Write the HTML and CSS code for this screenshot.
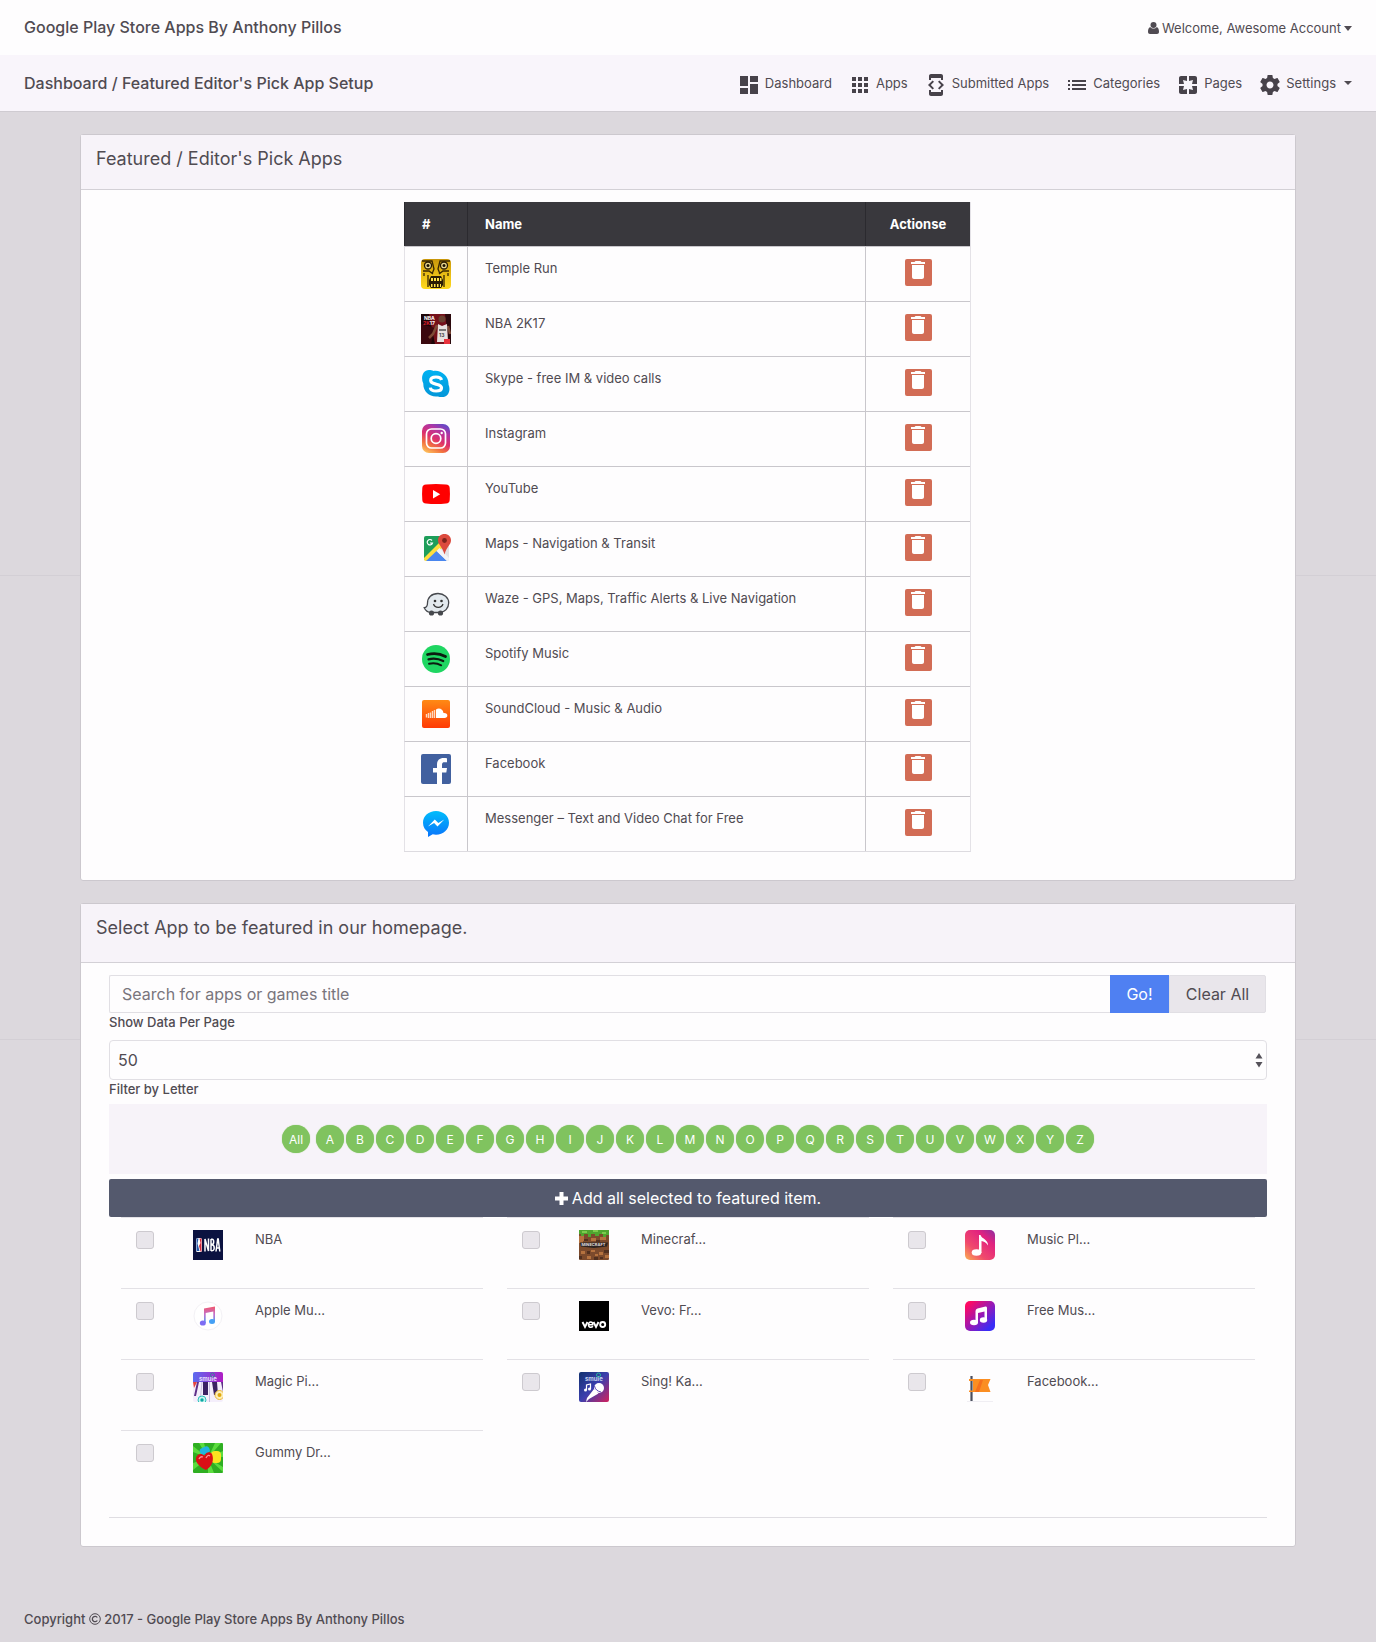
FILE: index.html
```html
<!DOCTYPE html>
<html lang="en">
<head>
<meta charset="utf-8">
<title>Google Play Store Apps By Anthony Pillos</title>
<link rel="stylesheet" href="styles.css">
</head>
<body>
<header class="topbar">
  <a class="brand" href="#">Google Play Store Apps By Anthony Pillos</a>
  <a class="account" href="#">
    <svg width="11" height="12" viewBox="0 0 11 12" fill="currentColor"><circle cx="5.500" cy="3" r="3"/><path d="M2.200 5C.6 5.500 0 7.500 0 9.800 0 11.200.8 12 2 12h7c1.200 0 2-.8 2-2.200C11 7.500 10.400 5.500 8.800 5 7 7 4 7 2.200 5z"/></svg>
    <span>Welcome, Awesome Account</span>
    <span class="caret"></span>
  </a>
</header>
<nav class="subnav">
  <h1 class="crumb">Dashboard / Featured Editor's Pick App Setup</h1>
  <ul class="menu">
    <li><a href="#"><svg class="mi" viewBox="0 0 24 24"><path d="M3 13h8V3H3v10zm0 8h8v-6H3v6zm10 0h8V11h-8v10zm0-18v6h8V3h-8z"/></svg>Dashboard</a></li>
    <li><a href="#"><svg class="mi" viewBox="0 0 24 24"><path d="M4 8h4V4H4v4zm6 12h4v-4h-4v4zm-6 0h4v-4H4v4zm0-6h4v-4H4v4zm6 0h4v-4h-4v4zm6-10v4h4V4h-4zm-6 4h4V4h-4v4zm6 6h4v-4h-4v4zm0 6h4v-4h-4v4z"/></svg>Apps</a></li>
    <li><a href="#"><svg class="mi" viewBox="0 0 24 24"><path d="M7 5h10v2h2V3c0-1.100-.9-1.990-2-1.990L7 1c-1.100 0-2 .9-2 2v4h2V5zm8.410 11.590L20 12l-4.590-4.590L14 8.830 17.170 12 14 15.170l1.410 1.420zM10 15.170L6.830 12 10 8.830 8.590 7.410 4 12l4.590 4.590L10 15.170zM17 19H7v-2H5v4c0 1.100.9 2 2 2h10c1.100 0 2-.9 2-2v-4h-2v2z"/></svg>Submitted Apps</a></li>
    <li><a href="#"><svg class="mi" viewBox="0 0 24 24"><path d="M3 13h2v-2H3v2zm0 4h2v-2H3v2zm0-8h2V7H3v2zm4 4h14v-2H7v2zm0 4h14v-2H7v2zM7 7v2h14V7H7z"/></svg>Categories</a></li>
    <li><a href="#"><svg class="mi" viewBox="0 0 24 24"><path d="M3 5v6h5L7 7l4 1V3H5c-1.100 0-2 .9-2 2zm5 8H3v6c0 1.100.9 2 2 2h6v-5l-4 1 1-4zm9 4l-4-1v5h6c1.100 0 2-.9 2-2v-6h-5l1 4zm2-14h-6v5l4-1-1 4h5V5c0-1.100-.9-2-2-2z"/></svg>Pages</a></li>
    <li><a href="#"><svg class="mi" viewBox="0 0 24 24"><path d="M19.430 12.980c.04-.32.07-.64.07-.98s-.03-.66-.07-.98l2.110-1.650c.19-.15.24-.42.12-.64l-2-3.460c-.12-.22-.39-.3-.61-.22l-2.490 1c-.52-.4-1.080-.73-1.690-.98l-.38-2.650C14.460 2.180 14.250 2 14 2h-4c-.25 0-.46.18-.49.42l-.38 2.650c-.61.25-1.170.59-1.690.98l-2.490-1c-.23-.09-.49 0-.61.22l-2 3.460c-.13.22-.07.49.12.64l2.110 1.650c-.04.32-.07.65-.07.98s.03.66.07.98l-2.110 1.650c-.19.15-.24.42-.12.64l2 3.460c.12.22.39.3.61.22l2.490-1c.52.4 1.080.73 1.690.98l.38 2.650c.03.24.24.42.49.42h4c.25 0 .46-.18.49-.42l.38-2.650c.61-.25 1.170-.59 1.690-.98l2.490 1c.23.09.49 0 .61-.22l2-3.460c.12-.22.07-.49-.12-.64l-2.110-1.650zM12 15.500c-1.930 0-3.500-1.570-3.500-3.500s1.570-3.500 3.500-3.500 3.500 1.570 3.500 3.500-1.570 3.500-3.500 3.500z"/></svg>Settings<span class="caret caret-gap"></span></a></li>
  </ul>
</nav>

<main class="page">
  <section class="card">
    <h2 class="card-title">Featured / Editor's Pick Apps</h2>
    <div class="card-table">
      <table class="picks">
        <thead><tr><th class="c-icon">#</th><th>Name</th><th class="c-act">Actionse</th></tr></thead>
        <tbody>
          <tr><td><svg class="app" viewBox="0 0 30 30"><defs><linearGradient id="tr" x1="0" y1="0" x2="0" y2="1"><stop offset="0" stop-color="#c8960a"/><stop offset=".6" stop-color="#eec318"/><stop offset="1" stop-color="#ffd91c"/></linearGradient></defs><rect width="30" height="30" rx="4" fill="url(#tr)"/><path d="M1 2h10l2 8-2 5M29 2H19l-2 8 2 5M2 12h6l4 3M28 12h-6l-4 3M7 16v12M23 16v12M3 14v3M27 14v3" fill="none" stroke="#3a2703" stroke-width="1.300"/><circle cx="7" cy="6.500" r="3.500" fill="#e9d890" stroke="#2a1b02" stroke-width="1.300"/><circle cx="23" cy="6.500" r="3.500" fill="#e9d890" stroke="#2a1b02" stroke-width="1.300"/><circle cx="7" cy="6.500" r="1.500" fill="#1d1200"/><circle cx="23" cy="6.500" r="1.500" fill="#1d1200"/><path d="M10 17h10l2 4v5l-2 3H10l-2-3v-5z" fill="#2a1b02"/><path d="M10 19h2v3h-2zM13 19h2v3h-2zM16 19h2v3h-2zM19 19h1.500v3H19zM10 25h1.500v3H10zM13 25h1.500v3H13zM16 25h1.500v3H16zM19 25h1v3h-1z" fill="#ffe14a"/></svg></td><td>Temple Run</td><td class="c-act"><button class="trash" aria-label="Remove Temple Run"><svg viewBox="0 0 24 24"><path d="M6 19c0 1.100.9 2 2 2h8c1.100 0 2-.9 2-2V7H6v12zM19 4h-3.500l-1-1h-5l-1 1H5v2h14V4z"/></svg></button></td></tr>
          <tr><td><svg class="app" viewBox="0 0 30 30"><rect width="30" height="30" fill="#1c0508"/><path d="M8 0h22v30H14z" fill="#74101a"/><path d="M0 10l14 4-4 16H0z" fill="#3b080e"/><path d="M24 0h6v30h-2z" fill="#2b080c"/><text x="3" y="6" font-size="5" font-weight="700" fill="#fff">NBA</text><text x="2" y="11" font-size="5" font-weight="700" fill="#e3222e">2K<tspan fill="#fff">17</tspan></text><circle cx="21" cy="5" r="3.500" fill="#6b4030"/><path d="M16 11l-4 9-4 4M27 12l2 8" stroke="#7e4a36" stroke-width="2.500" fill="none"/><path d="M17 10l4 2 5-2 1 18H16z" fill="#e8e2df"/><path d="M18 16h7" stroke="#555" stroke-width="1.500"/><text x="18" y="23" font-size="5" font-weight="700" fill="#444">13</text><rect x="23" y="25" width="6" height="5" fill="#e8313c"/></svg></td><td>NBA 2K17</td><td class="c-act"><button class="trash" aria-label="Remove NBA 2K17"><svg viewBox="0 0 24 24"><path d="M6 19c0 1.100.9 2 2 2h8c1.100 0 2-.9 2-2V7H6v12zM19 4h-3.500l-1-1h-5l-1 1H5v2h14V4z"/></svg></button></td></tr>
          <tr><td><svg class="app" viewBox="0 0 30 30"><defs><linearGradient id="sk" x1="0" y1="0" x2="0" y2="1"><stop offset="0" stop-color="#00b2f2"/><stop offset="1" stop-color="#0496d8"/></linearGradient></defs><path d="M8 1c2 0 3 .4 4.500 1C20 .8 28 7 27.500 15.500 30 21 27.500 28 21 28c-2 0-3 0-4-.6C9 28.500 2 23 2.300 14.500-.5 9 1.500 1 8 1z" fill="url(#sk)"/><path d="M20.500 11c-.5-2-2.500-3-5.500-3-3.200 0-5.300 1.300-5.300 3.500 0 2.500 2.500 3 5.500 3.700 3 .7 5.300 1.200 5.300 3.500 0 2-2 3.300-5.300 3.300S9.600 20.800 9.300 18.600" fill="none" stroke="#fff" stroke-width="3.200"/></svg></td><td>Skype - free IM &amp; video calls</td><td class="c-act"><button class="trash" aria-label="Remove Skype"><svg viewBox="0 0 24 24"><path d="M6 19c0 1.100.9 2 2 2h8c1.100 0 2-.9 2-2V7H6v12zM19 4h-3.500l-1-1h-5l-1 1H5v2h14V4z"/></svg></button></td></tr>
          <tr><td><svg class="app" viewBox="0 0 30 30"><defs><linearGradient id="ig" x1=".2" y1="1" x2=".7" y2="0"><stop offset="0" stop-color="#fdbf5c"/><stop offset=".25" stop-color="#f2703f"/><stop offset=".5" stop-color="#dd2f6c"/><stop offset=".8" stop-color="#b135a4"/><stop offset="1" stop-color="#6a48c4"/></linearGradient></defs><rect x="1" y="0" width="28" height="29" rx="7" fill="url(#ig)"/><rect x="5.500" y="5" width="19" height="19" rx="5" fill="none" stroke="#fff" stroke-width="1.700"/><circle cx="15" cy="14.500" r="4.800" fill="none" stroke="#fff" stroke-width="1.700"/><circle cx="20.700" cy="9" r="1.200" fill="#fff"/></svg></td><td>Instagram</td><td class="c-act"><button class="trash" aria-label="Remove Instagram"><svg viewBox="0 0 24 24"><path d="M6 19c0 1.100.9 2 2 2h8c1.100 0 2-.9 2-2V7H6v12zM19 4h-3.500l-1-1h-5l-1 1H5v2h14V4z"/></svg></button></td></tr>
          <tr><td><svg class="app" viewBox="0 0 30 30"><path d="M5 5.500q10-1 20 0 3.500.3 3.700 3.500.5 6 0 12-.2 3.200-3.700 3.500-10 1-20 0-3.500-.3-3.700-3.500-.5-6 0-12Q1.500 5.800 5 5.500z" fill="#f00"/><path d="M12 11v8.500l7.200-4.300z" fill="#fff"/></svg></td><td>YouTube</td><td class="c-act"><button class="trash" aria-label="Remove YouTube"><svg viewBox="0 0 24 24"><path d="M6 19c0 1.100.9 2 2 2h8c1.100 0 2-.9 2-2V7H6v12zM19 4h-3.500l-1-1h-5l-1 1H5v2h14V4z"/></svg></button></td></tr>
          <tr><td><svg class="app" viewBox="0 0 30 30"><rect x="3" y="2" width="25" height="25" rx="2" fill="#e2e2e6"/><path d="M5 2h17v7L3 26V4q0-2 2-2z" fill="#1e9e5a"/><path d="M3 24L20 7l3 5L8 27H5q-2 0-2-2z" fill="#ffdf3d"/><path d="M5 27l10.500-10L26 27z" fill="#4a86ee"/><path d="M15.500 17l3-3L28 24v1q0 2-2 2z" fill="#f3f3f6"/><path d="M23.500 0C19.800 0 17 2.700 17 6.300c0 4.700 4.700 6.700 6.500 14.200C25.300 13 30 11 30 6.300 30 2.700 27.200 0 23.500 0z" fill="#dc4a3e"/><circle cx="23.500" cy="6.500" r="2.400" fill="#7d231c"/><path d="M11 6.500A2.700 2.700 0 1 0 11.500 9H9" fill="none" stroke="#fff" stroke-width="1.200"/></svg></td><td>Maps - Navigation &amp; Transit</td><td class="c-act"><button class="trash" aria-label="Remove Maps"><svg viewBox="0 0 24 24"><path d="M6 19c0 1.100.9 2 2 2h8c1.100 0 2-.9 2-2V7H6v12zM19 4h-3.500l-1-1h-5l-1 1H5v2h14V4z"/></svg></button></td></tr>
          <tr><td><svg class="app" viewBox="0 0 30 30"><path d="M17 4.500c-6.500 0-10.500 4-10.500 9.500 0 3-1 4.500-3.300 4.700C4.500 21.500 7 23.500 10.500 23.500H18c6 0 9.700-4.500 9.700-9.700C27.700 8.500 23 4.500 17 4.500z" fill="#e3e9ee" stroke="#46484d" stroke-width="1.300"/><circle cx="10.500" cy="24" r="2.600" fill="#46484d"/><circle cx="19.500" cy="24" r="2.600" fill="#46484d"/><circle cx="14" cy="12" r="1.300" fill="#333"/><circle cx="20.500" cy="12" r="1.300" fill="#333"/><path d="M12.500 15c1.500 4.500 8 4.500 9.500 0" fill="none" stroke="#333" stroke-width="1.300"/></svg></td><td>Waze - GPS, Maps, Traffic Alerts &amp; Live Navigation</td><td class="c-act"><button class="trash" aria-label="Remove Waze"><svg viewBox="0 0 24 24"><path d="M6 19c0 1.100.9 2 2 2h8c1.100 0 2-.9 2-2V7H6v12zM19 4h-3.500l-1-1h-5l-1 1H5v2h14V4z"/></svg></button></td></tr>
          <tr><td><svg class="app" viewBox="0 0 30 30"><circle cx="15" cy="15" r="14" fill="#1fd662"/><path d="M6.500 10.500c6-1.500 12.500-1 18 2" stroke="#0c1b10" stroke-width="2.800" fill="none" stroke-linecap="round"/><path d="M7.500 15.300c5-1.300 10-.7 14.700 1.700" stroke="#0c1b10" stroke-width="2.300" fill="none" stroke-linecap="round"/><path d="M8 19.800c4.500-1 8.500-.5 12.200 1.500" stroke="#0c1b10" stroke-width="1.900" fill="none" stroke-linecap="round"/></svg></td><td>Spotify Music</td><td class="c-act"><button class="trash" aria-label="Remove Spotify"><svg viewBox="0 0 24 24"><path d="M6 19c0 1.100.9 2 2 2h8c1.100 0 2-.9 2-2V7H6v12zM19 4h-3.500l-1-1h-5l-1 1H5v2h14V4z"/></svg></button></td></tr>
          <tr><td><svg class="app" viewBox="0 0 30 30"><defs><linearGradient id="sc" x1="0" y1="0" x2="0" y2="1"><stop offset="0" stop-color="#ff8a15"/><stop offset="1" stop-color="#ff3a05"/></linearGradient></defs><rect x="1" y="1" width="28" height="28" rx="2" fill="url(#sc)"/><path d="M15 10.500c3-2 7-.5 7.500 3.500 5-.5 5 5 1 5h-8.500z" fill="#fff"/><path d="M5.500 15v3.500M7.500 14v5M9.500 13.500V19M11.500 12v7M13.500 11v8" stroke="#ffd9c0" stroke-width="1.400"/></svg></td><td>SoundCloud - Music &amp; Audio</td><td class="c-act"><button class="trash" aria-label="Remove SoundCloud"><svg viewBox="0 0 24 24"><path d="M6 19c0 1.100.9 2 2 2h8c1.100 0 2-.9 2-2V7H6v12zM19 4h-3.500l-1-1h-5l-1 1H5v2h14V4z"/></svg></button></td></tr>
          <tr><td><svg class="app" viewBox="0 0 30 30"><rect width="30" height="30" rx="2" fill="#41609f"/><path d="M16 30V18.500h-4V14h4v-3.500C16 6.500 18.500 4 22.500 4c1.500 0 3 .2 3.500.3v4h-2.500c-2 0-2.500 1-2.500 2.500V14h5l-.7 4.500H21V30z" fill="#fff"/></svg></td><td>Facebook</td><td class="c-act"><button class="trash" aria-label="Remove Facebook"><svg viewBox="0 0 24 24"><path d="M6 19c0 1.100.9 2 2 2h8c1.100 0 2-.9 2-2V7H6v12zM19 4h-3.500l-1-1h-5l-1 1H5v2h14V4z"/></svg></button></td></tr>
          <tr><td><svg class="app" viewBox="0 0 30 30"><defs><linearGradient id="ms" x1="0" y1="0" x2="0" y2="1"><stop offset="0" stop-color="#00bdfb"/><stop offset="1" stop-color="#0a74fb"/></linearGradient></defs><path d="M15 2C7.800 2 2 7 2 13.700c0 4.300 2 7.300 5 9.300v5l4.700-2.700c1 .2 2.200.4 3.300.4 7.200 0 13-5.300 13-12S22.200 2 15 2z" fill="url(#ms)"/><path d="M7 17.500l6.800-7 3.500 3.500 6-3.500-6.800 7-3.400-3.500z" fill="#fff"/></svg></td><td>Messenger – Text and Video Chat for Free</td><td class="c-act"><button class="trash" aria-label="Remove Messenger"><svg viewBox="0 0 24 24"><path d="M6 19c0 1.100.9 2 2 2h8c1.100 0 2-.9 2-2V7H6v12zM19 4h-3.500l-1-1h-5l-1 1H5v2h14V4z"/></svg></button></td></tr>
        </tbody>
      </table>
    </div>
  </section>

  <section class="card">
    <h2 class="card-title card-title-tall">Select App to be featured in our homepage.</h2>
    <form class="finder">
      <div class="search">
        <input type="text" class="search-box" placeholder="Search for apps or games title" aria-label="Search for apps or games title">
        <button type="button" class="btn-go">Go!</button>
        <button type="button" class="btn-clear">Clear All</button>
      </div>
      <label class="label" for="per-page">Show Data Per Page</label>
      <div class="select-wrap">
        <select id="per-page" class="select"><option>50</option></select>
        <svg class="select-arrows" width="8" height="16" viewBox="0 0 8 16"><path d="M4 1l3.500 5.500h-7zM4 15.500L.5 10h7z" fill="#55525a"/></svg>
      </div>
      <p class="label label-filter">Filter by Letter</p>
      <div class="letters">
        <a class="all" href="#">All</a><a href="#">A</a><a href="#">B</a><a href="#">C</a><a href="#">D</a><a href="#">E</a><a href="#">F</a><a href="#">G</a><a href="#">H</a><a href="#">I</a><a href="#">J</a><a href="#">K</a><a href="#">L</a><a href="#">M</a><a href="#">N</a><a href="#">O</a><a href="#">P</a><a href="#">Q</a><a href="#">R</a><a href="#">S</a><a href="#">T</a><a href="#">U</a><a href="#">V</a><a href="#">W</a><a href="#">X</a><a href="#">Y</a><a href="#">Z</a>
      </div>
      <button type="button" class="btn-add"><svg width="13" height="13" viewBox="0 0 13 13"><path d="M4.500 0h4v4.500H13v4H8.500V13h-4V8.500H0v-4h4.500z" fill="#fff"/></svg>Add all selected to featured item.</button>
      <div class="apps">
        <label class="pick"><input type="checkbox"><svg class="app" viewBox="0 0 30 30"><rect width="30" height="30" fill="#0b1240"/><rect x="3" y="8" width="6" height="14" rx="1.500" fill="#fff"/><path d="M3.500 8.500h2l-1 5 2 7.500h-3z" fill="#2358a8"/><path d="M6.500 8.500h2v13h-1L6 16l1.500-3z" fill="#d3283c"/><path d="M12 21.500V9l3.500 12V8.500M18 9v12M18 9.200h1.200q1.500 0 1.500 2.800t-2.700 2.800M18 15h1.200q2 0 2 3t-3.200 2.800M23 21.500l1.700-12.500h.5l1.600 12.500M23.500 18h3" fill="none" stroke="#fff" stroke-width="1.500"/></svg><span>NBA</span></label>
        <label class="pick"><input type="checkbox"><svg class="app" viewBox="0 0 30 30"><rect width="30" height="30" rx="1" fill="#7c4a2c"/><path d="M0 6h5v3h4v2H4v2H0zM12 8h5v3h-5zM21 7h6v3h-6zM2 21h4v3H2zM12 20h4v2h-4zM20 22h4v3h-4zM8 26h4v3H8zM26 25h4v3h-4zM16 24h3v2h-3z" fill="#b5723f"/><path d="M5 9h4v2H5zM17 10h4v2h-4zM8 21h3v3H8zM25 20h5v3h-5zM15 27h4v3h-4zM0 26h3v3H0zM21 27h3v2h-3z" fill="#51301f"/><path d="M0 0h30v5h-3v2h-3V4h-4v2h-4V4h-4v3H9V4H5v2H2V4H0z" fill="#4fa62f"/><path d="M3 1h5v2H3zM14 0h5v2h-5zM23 2h4v2h-4z" fill="#7dcb4e"/><path d="M1 12.500h28l-1 4-13 1.500-13-1.500z" fill="#2c2422"/><text x="2.500" y="16" font-size="4" font-weight="700" fill="#e0dedd">MINECRAFT</text></svg><span>Minecraf...</span></label>
        <label class="pick"><input type="checkbox"><svg class="app" viewBox="0 0 30 30"><defs><linearGradient id="mp" x1="0" y1="1" x2=".9" y2="0"><stop offset="0" stop-color="#fbb251"/><stop offset=".35" stop-color="#f04a6c"/><stop offset=".75" stop-color="#e2227f"/><stop offset="1" stop-color="#9a2d9c"/></linearGradient></defs><rect width="30" height="30" rx="5" fill="url(#mp)"/><ellipse cx="11.500" cy="22.500" rx="4.800" ry="3.200" fill="#fff"/><path d="M14 5h1.500c1 4 7.500 4 7.500 10.500-2-3-4-4-6.500-4.500v12H14z" fill="#fff"/></svg><span>Music Pl...</span></label>
        <label class="pick"><input type="checkbox"><svg class="app" viewBox="0 0 30 30"><defs><linearGradient id="am" x1="0" y1="0" x2="0" y2="1"><stop offset="0" stop-color="#f2566c"/><stop offset=".5" stop-color="#c072cf"/><stop offset="1" stop-color="#3fa0f6"/></linearGradient></defs><circle cx="15" cy="15" r="14" fill="#fff" stroke="#f3f1f5"/><path d="M11 7.500L22 5.500v15h-1.700v-10l-7.600 1.500V22H11z" fill="url(#am)"/><ellipse cx="9.800" cy="22" rx="3" ry="2.600" fill="#7d6cf3"/><ellipse cx="19" cy="20.500" rx="3" ry="2.500" fill="#45a0f5"/></svg><span>Apple Mu...</span></label>
        <label class="pick"><input type="checkbox"><svg class="app" viewBox="0 0 30 30"><rect width="30" height="30" fill="#000"/><path d="M3.500 21l2.500 5 2.500-5M14.500 21l2.500 5 2.500-5" fill="none" stroke="#fff" stroke-width="1.900"/><path d="M9.500 23.700h4.300c0-3.500-4.300-3.500-4.300 0s3.500 3 4.300 1.500" fill="none" stroke="#fff" stroke-width="1.500"/><circle cx="23.700" cy="23.500" r="2.500" fill="none" stroke="#fff" stroke-width="1.900"/></svg><span>Vevo: Fr...</span></label>
        <label class="pick"><input type="checkbox"><svg class="app" viewBox="0 0 30 30"><defs><linearGradient id="fm" x1="0" y1="0" x2="1" y2="1"><stop offset=".1" stop-color="#ff0a63"/><stop offset=".5" stop-color="#9a18b4"/><stop offset=".85" stop-color="#3a2cf5"/></linearGradient></defs><rect width="30" height="30" rx="5" fill="url(#fm)"/><path d="M10.500 10q0-2 2-2.500l8-2Q22 5 22 7v12h-2.500v-8.500L13 12v10h-2.500z" fill="#fff"/><ellipse cx="9" cy="21.500" rx="4" ry="2.800" fill="#fff"/><ellipse cx="18.500" cy="19" rx="3.700" ry="2.800" fill="#fff"/></svg><span>Free Mus...</span></label>
        <label class="pick"><input type="checkbox"><svg class="app" viewBox="0 0 30 30"><defs><linearGradient id="mg"><stop offset="0" stop-color="#5b6cf0"/><stop offset="1" stop-color="#b01cc4"/></linearGradient></defs><rect width="30" height="30" rx="2" fill="#f4eefb"/><path d="M0 10V2q0-2 2-2h26q2 0 2 2v8z" fill="url(#mg)"/><text x="6" y="9" font-size="6" font-weight="700" fill="#e4dcfa">smule</text><circle cx="19.500" cy="3" r="2" fill="none" stroke="#3f7b9c"/><path d="M10 10h5v13h-5zM19 10h5l1 13h-4z" fill="#3b2263"/><path d="M4 10h2L3 24H1zM28 10l2 10V10z" fill="#5f2f88"/><path d="M0 10h4L1 16z" fill="#e5433d"/><path d="M7 30l2-20M16.500 10v20" stroke="#c9bfe0"/><circle cx="9" cy="28" r="4" fill="#c8f4f0" stroke="#2fc4bd"/><circle cx="9" cy="28" r="1.700" fill="#0aa7a2"/><circle cx="26.500" cy="23" r="4.500" fill="#fdeeb8" stroke="#eab83b"/><circle cx="26.500" cy="23" r="2" fill="#e0a80c"/></svg><span>Magic Pi...</span></label>
        <label class="pick"><input type="checkbox"><svg class="app" viewBox="0 0 30 30"><defs><linearGradient id="sg" x1="0" y1="0" x2="1" y2="1"><stop offset="0" stop-color="#11306f"/><stop offset=".5" stop-color="#3b3fae"/><stop offset="1" stop-color="#d3205c"/></linearGradient></defs><rect width="30" height="30" rx="2" fill="url(#sg)"/><text x="6" y="9" font-size="6" font-weight="700" fill="#c5d3ee">smule</text><circle cx="19.500" cy="3" r="2" fill="none" stroke="#27b59b"/><circle cx="20" cy="16" r="5" fill="#fff"/><path d="M15 17l4.500 4.500L10 27l-3 3 1-4z" fill="#fff"/><path d="M15.500 14q1 5 6.500 6" stroke="#5b46b5" fill="none"/><path d="M7.500 18v-5l4-1v5" stroke="#fff" stroke-width="1.200" fill="none"/><circle cx="6.500" cy="18" r="1.500" fill="#fff"/><circle cx="10.500" cy="17" r="1.500" fill="#fff"/></svg><span>Sing! Ka...</span></label>
        <label class="pick"><input type="checkbox"><svg class="app" viewBox="0 0 30 30"><path d="M6.500 4v26" stroke="#4a4f5e" stroke-width="2.200"/><path d="M4 7h21.500L23 13l2.500 7H4v-1.500h4V9H4z" fill="#fb8e22"/><path d="M10 20l5-12h3l-4 12z" fill="#f5701d"/><path d="M2 29.500h26" stroke="#f0eef3"/></svg><span>Facebook...</span></label>
        <label class="pick"><input type="checkbox"><svg class="app" viewBox="0 0 30 30"><rect width="30" height="30" rx="1" fill="#2fae22"/><path d="M15 15L0 3v6zM15 15L6 0h5zM15 15L22 0h6zM15 15l15-7v6zM15 15l15 9v5zM15 15l6 15h-6zM15 15L0 20v7z" fill="#5bdc3e"/><rect x="7" y="4" width="10" height="7" rx="3" fill="#21b5e0" transform="rotate(-25 12 8)"/><rect x="18" y="8" width="10" height="12" rx="4" fill="#fbe320"/><path d="M13 27C6 24 1 18 3.500 13.500 5.500 10 9 10.500 11.500 12.500 13 9 17 8 19 11c2 5 1 12-6 16z" fill="#d90f16"/><path d="M6 16q1-3 4-2M13 15q2-4 4-2" stroke="#ff8f8f" fill="none" stroke-width="1.300"/></svg><span>Gummy Dr...</span></label>
      </div>
      <hr class="rule">
    </form>
  </section>
</main>
<footer class="footer">Copyright <svg width="12" height="12" viewBox="0 0 12 12" fill="none" stroke="currentColor"><circle cx="6" cy="6" r="5.300"/><path d="M8.300 4.500a2.700 2.700 0 1 0 0 3" stroke-width="1.300"/></svg> 2017 - Google Play Store Apps By Anthony Pillos</footer>
</body>
</html>
```
FILE: styles.css
```css
* { box-sizing: border-box; }
body {
  margin: 0;
  font-family: Inter, "Liberation Sans", sans-serif;
  font-size: 13px;
  line-height: 18px;
  color: #504b52;
  background-color: #dcd8dd;
}
a { color: inherit; text-decoration: none; }
button, input, select { font: inherit; color: inherit; margin: 0; }

.topbar, .subnav {
  display: flex;
  align-items: center;
  justify-content: space-between;
  padding: 0 24px;
}
.topbar { height: 55px; padding-bottom: 1px; background: #fefdfe; }
.subnav { height: 57px; background: #f9f5fb; border-bottom: 1px solid #cfcbd1; }
.brand, .crumb { margin: 0; font-size: 16px; line-height: 24px; font-weight: 500; }
.account { display: flex; align-items: center; gap: 3px; padding-top: 2px; }
.caret { border: 4px solid transparent; border-top: 5px solid; border-bottom: 0; }
.caret:not(.caret-gap) { border-top-width: 5px; }
.caret { border-left-color: transparent; border-right-color: transparent; }
.caret-gap { margin-left: 4px; border-top-width: 4px; }
.menu { display: flex; gap: 16px; margin: 0; padding: 0; list-style: none; }
.menu a { display: flex; align-items: center; gap: 4px; }
.mi { width: 24px; height: 24px; fill: #47424a; margin-top: 4px; }

.page {
  display: flex;
  flex-direction: column;
  gap: 22px;
  padding: 22px 80px 0;
  background-image: linear-gradient(#dcd8dd 463px, #d3cfd5 463px, #d3cfd5 464px, #dcd8dd 464px, #dcd8dd 927px, #d3cfd5 927px, #d3cfd5 928px, #dcd8dd 928px);
}
.card {
  background: #fefdfe;
  border: 1px solid #ccc8ce;
  border-radius: 3px;
}
.card-title {
  margin: 0;
  padding: 12px 15px 18px;
  font-size: 18px;
  line-height: 24px;
  font-weight: 400;
  background: #f7f3f9;
  border-bottom: 1px solid #d3d0d6;
}
.card-title-tall { padding-bottom: 22px; }

.card-table { padding: 12px 1px 28px 0; }
.picks {
  width: 567px;
  margin: 0 auto;
  table-layout: fixed;
  border-collapse: separate;
  border-spacing: 0;
  border-right: 1px solid #e4e2e7;
  border-bottom: 1px solid #dddbe0;
}
.picks th {
  height: 44px;
  padding: 0 17px;
  text-align: left;
  font-weight: 700;
  color: #fff;
  background: #39383d;
  border-left: 1px solid #2b2a2f;
}
.picks td {
  height: 55px;
  padding: 12px 17px 0;
  vertical-align: top;
  border-top: 1px solid #c9c7cc;
  border-left: 1px solid #c9c7cc;
}
.picks td:first-child { padding-left: 16px; border-left-color: #e4e2e7; }
.picks .c-icon { width: 63px; }
.picks .c-act { width: 105px; text-align: center; }
.app { display: block; width: 30px; height: 30px; font-family: Inter, sans-serif; }
.trash {
  display: inline-flex;
  justify-content: center;
  width: 27px;
  height: 27px;
  padding: 0;
  border: 0;
  border-radius: 2px;
  background: #d26c55;
}
.trash svg { width: 24px; height: 24px; fill: #fff; margin-top: -1px; }

.finder { padding: 12px 28px 28px; }
.search { display: flex; padding-right: 1px; font-size: 16px; line-height: 24px; }
.search-box {
  flex: 1;
  min-width: 0;
  height: 38px;
  padding: 0 12px;
  background: #fefdfe;
  border: 1px solid #e1dfe4;
  border-right: 0;
  border-radius: 2px 0 0 2px;
}
.search-box::placeholder { color: #79757c; opacity: 1; }
.btn-go, .btn-clear { height: 38px; border: 0; }
.btn-go { width: 59px; padding: 0; color: #fff; background: #4f80f2; }
.btn-clear {
  width: 97px;
  padding: 0;
  background: #e9e6eb;
  border: 1px solid #e1dfe4;
  border-radius: 0 2px 2px 0;
}
.label { display: block; margin: 0 0 9px; font-weight: 500; }
.label-filter { margin-bottom: 6px; }
.select-wrap { position: relative; }
.select {
  display: block;
  width: 100%;
  height: 40px;
  padding: 0 8px;
  font-size: 16px;
  appearance: none;
  background: #fefdfe;
  border: 1px solid #e1dfe4;
  border-radius: 4px;
}
.select-arrows { position: absolute; right: 4px; top: 12px; pointer-events: none; }
.letters {
  display: flex;
  justify-content: center;
  gap: 2px;
  padding: 21px 0;
  background: #f7f3f9;
}
.letters a {
  width: 28px;
  height: 28px;
  border-radius: 14px;
  font-size: 12px;
  line-height: 30px;
  text-align: center;
  color: #fff;
  background: #80c35f;
  box-shadow: 0 0 1px #80c35f;
}
.letters .all { margin-right: 4px; }
.btn-add {
  display: flex;
  align-items: center;
  justify-content: center;
  gap: 4px;
  width: 100%;
  height: 38px;
  margin-top: 5px;
  border: 0;
  border-radius: 2px;
  font-size: 16px;
  color: #fff;
  background: #54596d;
}
.apps {
  display: grid;
  grid-template-columns: repeat(3, 1fr);
  column-gap: 24px;
  padding: 0 12px;
}
.pick {
  display: grid;
  grid-template-columns: 41px 46px 1fr;
  column-gap: 16px;
  align-items: start;
  height: 71px;
  padding: 12px 15px;
  border-top: 1px solid #e3e1e6;
}
.pick input {
  appearance: none;
  width: 18px;
  height: 18px;
  margin-top: 1px;
  background: #e9e6eb;
  border: 1px solid #cdcacf;
  border-radius: 3px;
}
.rule { margin: 16px 0 0; border: 0; border-top: 1px solid #dfdde2; }
.footer { padding: 63px 24px 15px; font-weight: 500; }
.footer svg { vertical-align: -1px; }
```
